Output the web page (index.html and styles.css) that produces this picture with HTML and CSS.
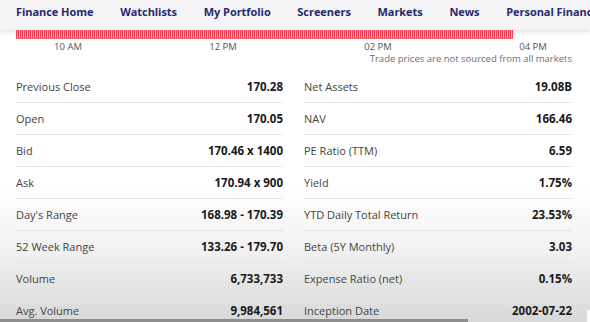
FILE: index.html
```html
<!DOCTYPE html>
<html>
<head>
<meta charset="utf-8">
<link rel="stylesheet" href="styles.css">
</head>
<body>
<div class="page">
  <nav class="nav">
    <span class="nav-item">Finance Home</span>
    <span class="nav-item">Watchlists</span>
    <span class="nav-item">My Portfolio</span>
    <span class="nav-item">Screeners</span>
    <span class="nav-item">Markets</span>
    <span class="nav-item">News</span>
    <span class="nav-item">Personal Finance</span>
  </nav>
  <div class="chart">
    <div class="strip"></div>
    <div class="axis">
      <span class="tick">10 AM</span>
      <span class="tick">12 PM</span>
      <span class="tick">02 PM</span>
      <span class="tick">04 PM</span>
    </div>
    <div class="note">Trade prices are not sourced from all markets</div>
  </div>
  <div class="stats">
    <div class="col">
      <div class="row"><span class="label">Previous Close</span><span class="value">170.28</span></div>
      <div class="row"><span class="label">Open</span><span class="value">170.05</span></div>
      <div class="row"><span class="label">Bid</span><span class="value">170.46 x 1400</span></div>
      <div class="row"><span class="label">Ask</span><span class="value">170.94 x 900</span></div>
      <div class="row"><span class="label">Day's Range</span><span class="value">168.98 - 170.39</span></div>
      <div class="row"><span class="label">52 Week Range</span><span class="value">133.26 - 179.70</span></div>
      <div class="row"><span class="label">Volume</span><span class="value">6,733,733</span></div>
      <div class="row"><span class="label">Avg. Volume</span><span class="value">9,984,561</span></div>
    </div>
    <div class="col">
      <div class="row"><span class="label">Net Assets</span><span class="value">19.08B</span></div>
      <div class="row"><span class="label">NAV</span><span class="value">166.46</span></div>
      <div class="row"><span class="label">PE Ratio (TTM)</span><span class="value">6.59</span></div>
      <div class="row"><span class="label">Yield</span><span class="value">1.75%</span></div>
      <div class="row"><span class="label">YTD Daily Total Return</span><span class="value">23.53%</span></div>
      <div class="row"><span class="label">Beta (5Y Monthly)</span><span class="value">3.03</span></div>
      <div class="row"><span class="label">Expense Ratio (net)</span><span class="value">0.15%</span></div>
      <div class="row"><span class="label">Inception Date</span><span class="value">2002-07-22</span></div>
    </div>
  </div>
  <div class="progress"></div>
  <div class="corner"></div>
</div>
</body>
</html>
```
FILE: styles.css
```css
html, body {
  margin: 0;
  padding: 0;
}
body {
  width: 590px;
  height: 322px;
  overflow: hidden;
  font-family: "Open Sans", "Liberation Sans", sans-serif;
  background: #fff;
}
.page {
  position: relative;
  width: 590px;
  height: 322px;
  overflow: hidden;
  background: linear-gradient(to bottom, #ffffff 0px, #ffffff 185px, #f1f1f1 250px, #d8d8d8 322px);
}
.nav {
  height: 30px;
  box-sizing: border-box;
  display: flex;
  align-items: flex-start;
  gap: 26.7px;
  padding: 4px 0 0 16px;
  background: #f4f4f6;
  box-shadow: 0 2px 4px rgba(0,0,0,0.12);
  white-space: nowrap;
  overflow: hidden;
  position: relative;
  z-index: 2;
}
.nav-item {
  font-size: 11px;
  line-height: 16px;
  font-weight: 700;
  color: #262a6c;
  letter-spacing: -0.05px;
}
.chart {
  padding: 0 18px 0 16px;
}
.strip {
  width: 497px;
  height: 8px;
  background:
    repeating-linear-gradient(to right, #ef4458 0 1px, #f9a0aa 1px 2px, #e8364c 2px 3px, #fbc3ca 3px 4px);
  border-bottom: 1px solid #f06070;
}
.axis {
  display: flex;
  gap: 111px;
  padding-left: 30px;
  margin-top: 2px;
  height: 12px;
}
.tick {
  width: 44px;
  text-align: center;
  font-size: 9.5px;
  color: #555;
  line-height: 12px;
}
.note {
  text-align: right;
  font-size: 9.5px;
  color: #6e6e6e;
  line-height: 12px;
}
.stats {
  display: grid;
  grid-template-columns: 267px 268px;
  column-gap: 21px;
  padding: 0 18px 0 16px;
  margin-top: 6px;
}
.row {
  height: 31px;
  display: flex;
  align-items: center;
  justify-content: space-between;
  border-bottom: 1px solid rgba(225,225,225,0.8);
  font-size: 11px;
}
.label {
  color: #444;
}
.value {
  color: #1a1a1a;
  font-weight: 700;
  font-size: 11.5px;
}
.progress {
  position: absolute;
  left: 0;
  width: 468px;
  bottom: 0;
  height: 3px;
  background: #8e8e8e;
}
.corner {
  position: absolute;
  right: 0;
  width: 3px;
  bottom: 0;
  height: 12px;
  background: #fafafa;
}
```
